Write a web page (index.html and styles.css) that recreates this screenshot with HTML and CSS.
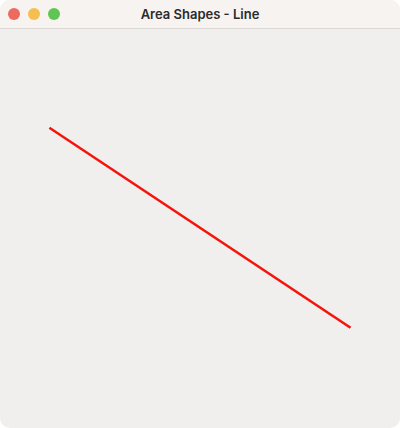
FILE: index.html
```html
<!DOCTYPE html>
<html>
<head>
<meta charset="utf-8">
<link rel="stylesheet" href="styles.css">
</head>
<body>
<div class="window">
  <div class="titlebar">
    <div class="lights">
      <span class="light red"></span>
      <span class="light yellow"></span>
      <span class="light green"></span>
    </div>
    <div class="title">Area Shapes - Line</div>
  </div>
  <div class="content">
    <svg class="canvas" width="400" height="399" viewBox="0 0 400 399">
      <line x1="50.5" y1="99.5" x2="349.5" y2="298" stroke="#f5140c" stroke-width="2.6" stroke-linecap="square"/>
    </svg>
  </div>
</div>
</body>
</html>
```
FILE: styles.css
```css
html, body {
  margin: 0;
  padding: 0;
  background: #ffffff;
}
.window {
  width: 400px;
  height: 428px;
  border-radius: 10px;
  overflow: hidden;
  background: #f0efed;
  display: flex;
  flex-direction: column;
}
.titlebar {
  height: 28px;
  background: #f6f3f1;
  border-bottom: 1px solid #dcd9d7;
  display: flex;
  align-items: center;
  position: relative;
  flex: none;
}
.lights {
  display: flex;
  gap: 8px;
  padding-left: 8px;
}
.light {
  width: 12px;
  height: 12px;
  border-radius: 50%;
  display: block;
}
.red { background: #ed6a5e; }
.yellow { background: #f5bf4f; }
.green { background: #61c554; }
.title {
  position: absolute;
  left: 0;
  right: 0;
  top: 0;
  height: 28px;
  line-height: 28px;
  text-align: center;
  font-family: Inter, "Liberation Sans", sans-serif;
  font-weight: 600;
  font-size: 13px;
  color: #2b2b2b;
}
.content {
  flex: 1;
}
.canvas {
  display: block;
}
```
